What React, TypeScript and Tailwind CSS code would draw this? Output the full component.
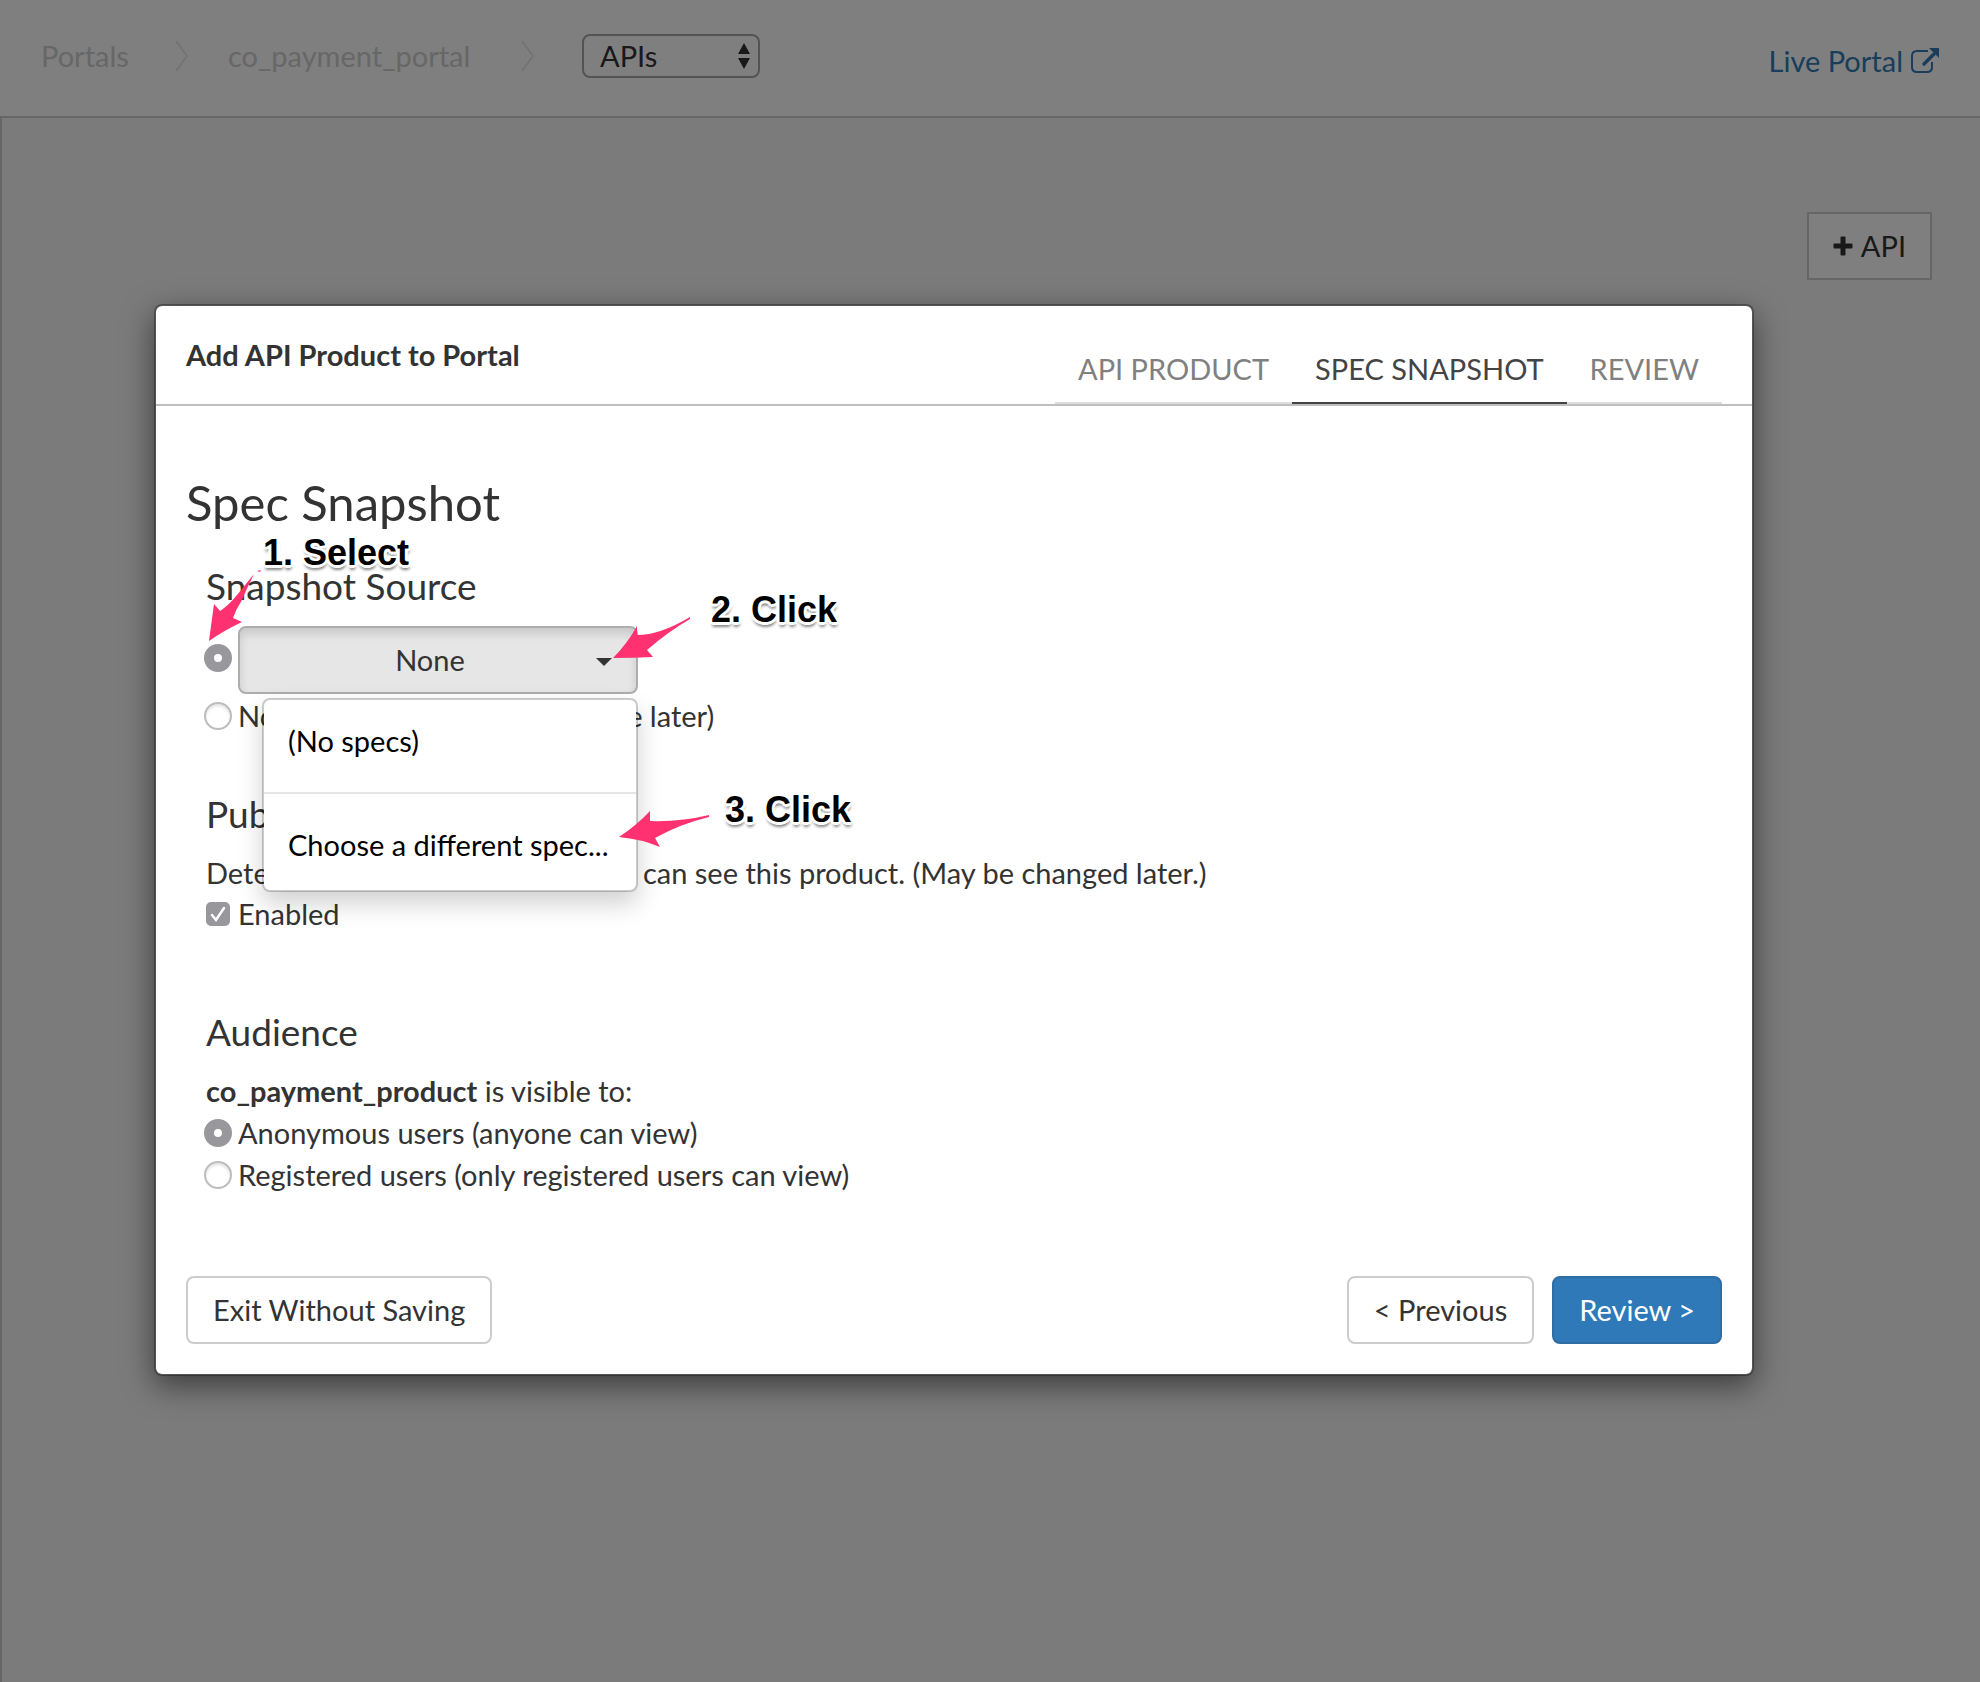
import React, { useState } from "react";
import type { ReactNode } from "react";

function Chevron() {
  return (
    <svg className="h-8 w-4 text-[#e6e6e6]" viewBox="0 0 16 32" fill="none" stroke="currentColor" strokeWidth="2" aria-hidden="true">
      <path d="M2 1 L13 16 L2 31" />
    </svg>
  );
}

function ExternalLinkIcon() {
  return (
    <svg className="h-7 w-7" viewBox="0 0 28 28" fill="none" aria-hidden="true">
      <path d="M17 4 H6 Q1 4 1 9 V20 Q1 25 6 25 H16 Q21 25 21 20 V15" stroke="currentColor" strokeWidth="2" />
      <path d="M13 17 L23 7" stroke="currentColor" strokeWidth="3.400" strokeLinecap="round" />
      <path d="M18 1 H28 V11 Z" fill="currentColor" />
    </svg>
  );
}

function PlusIcon() {
  return (
    <svg className="h-5 w-5" viewBox="0 0 20 20" aria-hidden="true">
      <rect x="7.500" y="0.500" width="5" height="19" rx="1" fill="currentColor" />
      <rect x="0.500" y="7.500" width="19" height="5" rx="1" fill="currentColor" />
    </svg>
  );
}

const radioClass =
  "-ml-0.5 mr-1.5 size-7 shrink-0 appearance-none rounded-full border-2 border-[#bdbdbd] bg-white shadow-[inset_0_2px_3px_rgba(0,0,0,0.12)] checked:border-[10px] checked:border-[#98979c] checked:shadow-none";

function Note({ className, children }: { className: string; children: ReactNode }) {
  return (
    <span
      className={`pointer-events-none absolute whitespace-nowrap font-['Liberation_Sans',Arial,sans-serif] text-[36px] leading-[40px] font-bold text-black [text-shadow:2px_0_0_#fff,-2px_0_0_#fff,0_2px_0_#fff,0_-2px_0_#fff,2px_2px_0_#fff,-2px_2px_0_#fff,2px_-2px_0_#fff,-2px_-2px_0_#fff,3px_0_0_#fff,-3px_0_0_#fff,0_3px_0_#fff,0_5px_3px_rgba(0,0,0,0.4),2px_4px_3px_rgba(0,0,0,0.2)] ${className}`}
    >
      {children}
    </span>
  );
}

export default function App() {
  const [source, setSource] = useState("spec");
  const [audience, setAudience] = useState("anonymous");
  const [enabled, setEnabled] = useState(true);

  return (
    <div className="relative flex min-h-screen flex-col bg-white font-[Lato,sans-serif] text-[29px] leading-[40px] text-[#333]">
      <header className="flex h-[118px] items-start justify-between border-b-2 border-[#ccc] pr-[41px] pl-[41px]">
        <nav className="flex items-center pt-[34px] text-[#cecece]" aria-label="Breadcrumb">
          <a href="#portals" className="w-[133px]">Portals</a>
          <Chevron />
          <a href="#portal" className="ml-[38px] w-[292px]">co_payment_portal</a>
          <Chevron />
          <div className="relative ml-[46px]">
            <select
              aria-label="Portal section"
              className="block h-11 w-[178px] appearance-none rounded-lg border-2 border-[#a6a6a6] bg-white pl-4 text-[#333]"
              defaultValue="APIs"
            >
              <option>APIs</option>
              <option>Pages</option>
            </select>
            <svg className="pointer-events-none absolute top-2 right-2 h-7 w-4" viewBox="0 0 16 28" fill="#333" aria-hidden="true">
              <path d="M8 1 L14 12 H2 Z M8 27 L14 16 H2 Z" />
            </svg>
          </div>
        </nav>
        <a href="#live" className="mt-[41px] flex items-center gap-2 text-[#337ab7]">
          Live Portal
          <ExternalLinkIcon />
        </a>
      </header>
      <main className="flex-1 border-l-2 border-[#ccc] bg-[#f7f7f7]">
        <div className="flex justify-end pt-[94px] pr-12">
          <button className="flex h-[68px] items-center gap-2 border-2 border-[#ccc] bg-white px-6">
            <PlusIcon />
            API
          </button>
        </div>
      </main>

      <div className="absolute inset-0 bg-black/50 pt-[304px] pr-[226px] pl-[154px]">
        <section
          role="dialog"
          aria-label="Add API Product to Portal"
          className="rounded-lg border-2 border-black/30 bg-white bg-clip-padding shadow-[0_10px_30px_rgba(0,0,0,0.5)]"
        >
          <header className="flex h-[100px] items-end justify-between border-b-2 border-[#bfbfbf] px-[30px]">
            <h1 className="self-start pt-[29px] font-bold">Add API Product to Portal</h1>
            <div role="tablist" className="flex text-[#808080]">
              <button role="tab" className="border-b-2 border-[#ddd] px-[23px] pb-[13px]">API PRODUCT</button>
              <button role="tab" aria-selected="true" className="border-b-2 border-[#444] px-[23px] pb-[13px] text-[#444]">SPEC SNAPSHOT</button>
              <button role="tab" className="border-b-2 border-[#ddd] px-[23px] pb-[13px]">REVIEW</button>
            </div>
          </header>

          <form className="px-[30px] pb-[30px]" onSubmit={(e) => e.preventDefault()}>
            <h2 className="pt-[68px] text-[49px] leading-[56px]">Spec Snapshot</h2>

            <div className="pl-5">
              <section className="relative pt-[34px]">
                <h3 className="text-[37px] leading-[44px]">Snapshot Source</h3>
                <div className="flex items-start pt-[18px]">
                  <input type="radio" name="source" aria-label="Use a spec" className={`mt-[18px] ${radioClass}`} checked={source === "spec"} onChange={() => setSource("spec")} />
                  <div className="relative">
                    <button
                      type="button"
                      aria-haspopup="menu"
                      aria-expanded="true"
                      className="flex h-[68px] w-[400px] items-center rounded-lg border-2 border-[#adadad] bg-[#e6e6e6] pr-6 pl-6 shadow-[inset_0_6px_10px_rgba(0,0,0,0.125)]"
                    >
                      <span className="flex-1 text-center">None</span>
                      <svg className="mt-1 h-2 w-4" viewBox="0 0 16 8" fill="#333" aria-hidden="true">
                        <path d="M0 0 H16 L8 8 Z" />
                      </svg>
                    </button>
                    <div
                      role="menu"
                      className="absolute top-[72px] right-0 z-10 w-[376px] rounded-lg border-2 border-black/20 bg-white bg-clip-padding text-black shadow-[0_12px_24px_rgba(0,0,0,0.18)]"
                    >
                      <button type="button" role="menuitem" className="block w-full border-b-2 border-[#e5e5e5] px-6 pt-[21px] pb-[31px] text-left">(No specs)</button>
                      <button type="button" role="menuitem" className="block w-full px-6 pt-[31px] pb-[25px] text-left whitespace-nowrap">Choose a different spec...</button>
                    </div>
                  </div>
                </div>
                <label className="flex items-center leading-[44px]">
                  <input type="radio" name="source" className={radioClass} checked={source === "none"} onChange={() => setSource("none")} />
                  No snapshot (you can make one later)
                </label>

                <svg className="pointer-events-none absolute top-0 -left-5 z-20 h-[350px] w-[540px]" viewBox="186 530 540 350" fill="#ff3170" aria-hidden="true">
                  <path d="M254 574 Q247 588 242 600 Q236 609 233 618 L242 622 Q223 631 209 641 L214 604 L220 611 Q229 605 237 595 Q246 584 254 574 Z" />
                  <path d="M257 571 L261 570 L260 572 Z" />
                  <path d="M690 617 V619 Q669 631 647 650 L653 657 Q633 658 613 658 Q627 644 637 626 V635 Q660 635 690 617 Z" />
                  <path d="M709 815 V817 Q680 824 655 838 L660 847 Q641 839 619 837 Q637 825 650 811 V821 Q681 822 709 815 Z" />
                </svg>
                <Note className="top-[3px] left-[57px]">1. Select</Note>
                <Note className="top-[60px] left-[505px]">2. Click</Note>
                <Note className="top-[260px] left-[519px] z-20">3. Click</Note>
              </section>

              <section className="pt-[54px]">
                <h3 className="text-[37px] leading-[44px]">Published</h3>
                <p className="pt-[17px]">Determines whether your viewers can see this product. (May be changed later.)</p>
                <label className="flex items-center leading-[42px]">
                  <span className="relative mr-2 flex">
                    <input type="checkbox" className="size-6 appearance-none rounded-[5px] border-2 border-[#98979c] bg-white checked:bg-[#98979c]" checked={enabled} onChange={(e) => setEnabled(e.target.checked)} />
                    <svg className="pointer-events-none absolute inset-0 size-6" viewBox="0 0 24 24" fill="none" stroke="#fff" strokeWidth="2.500" strokeLinecap="round" aria-hidden="true">
                      <path d="M6 13 L10 18 L18 6" />
                    </svg>
                  </span>
                  Enabled
                </label>
              </section>

              <section className="pt-[75px]">
                <h3 className="text-[37px] leading-[44px]">Audience</h3>
                <p className="pt-[17px] pb-px"><strong className="font-bold">co_payment_product</strong> is visible to:</p>
                <label className="flex items-center leading-[42px]">
                  <input type="radio" name="audience" className={radioClass} checked={audience === "anonymous"} onChange={() => setAudience("anonymous")} />
                  Anonymous users (anyone can view)
                </label>
                <label className="flex items-center leading-[42px]">
                  <input type="radio" name="audience" className={radioClass} checked={audience === "registered"} onChange={() => setAudience("registered")} />
                  Registered users (only registered users can view)
                </label>
              </section>
            </div>

            <div className="flex gap-[18px] pt-20">
              <button type="button" className="h-[68px] rounded-lg border-2 border-[#ccc] bg-white px-[25px]">Exit Without Saving</button>
              <button type="button" className="ml-auto h-[68px] rounded-lg border-2 border-[#ccc] bg-white px-[25px]">&lt; Previous</button>
              <button type="submit" className="h-[68px] rounded-lg border-2 border-[#2e6da4] bg-[#2f79b9] px-[25px] text-white">Review &gt;</button>
            </div>
          </form>
        </section>
      </div>
    </div>
  );
}
